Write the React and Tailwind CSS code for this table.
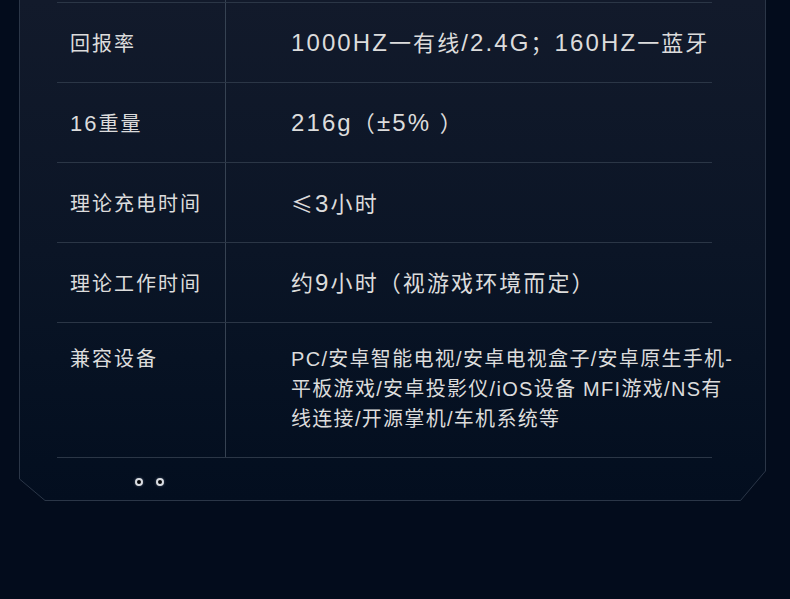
import React from 'react';

// latin runs render a bit larger than the CJK ones in the reference
const mixed = (s, cls = 'text-[24px]') =>
  s.split(/([\x20-\x7E±]+)/).filter(Boolean).map((part, i) =>
    /^[\x20-\x7E±]/.test(part) ? (
      <span key={i} className={cls}>{part}</span>
    ) : (
      <span key={i}>{part}</span>
    )
  );

const rows = [
  { label: '回报率', value: mixed('1000HZ一有线/2.4G；160HZ一蓝牙') },
  { label: mixed('16重量', 'text-[22px]'), value: mixed('216g（±5% ）') },
  {
    label: '理论充电时间',
    value: (
      <>
        <span className="font-['Noto_Sans_CJK_SC',sans-serif]">≤</span>
        <span className="text-[24px]">3</span>小时
      </>
    ),
  },
  { label: '理论工作时间', value: mixed('约9小时（视游戏环境而定）') },
];

const compat = [
  'PC/安卓智能电视/安卓电视盒子/安卓原生手机-',
  '平板游戏/安卓投影仪/iOS设备 MFI游戏/NS有',
  '线连接/开源掌机/车机系统等',
];

const SpecRow = ({ label, value }) => (
  <div className="flex h-[80px] border-t border-[#2b3646]">
    <div className="w-[168px] shrink-0 flex items-center pl-[13px] pt-[2px] text-[20px] leading-[30px] tracking-[2px]">
      <div>{label}</div>
    </div>
    <div className="flex-1 flex items-center pl-[65px] pt-[2px] border-l border-[#364252] text-[22px] leading-[30px] tracking-[2.1px] whitespace-nowrap">
      <div>{value}</div>
    </div>
  </div>
);

export default function App() {
  return (
    <div className="w-[790px] h-[599px] bg-[#030c1c] overflow-hidden font-['Liberation_Sans','Noto_Sans_CJK_SC',sans-serif] text-[#dcdcdc]">
      <div className="relative ml-[19px] w-[747px] h-[501px]">
        <div className="absolute inset-0 bg-linear-to-b from-[#121a2b] via-[#0b1526] to-[#030e1f] [clip-path:polygon(0_0,100%_0,100%_471px,calc(100%_-_25px)_100%,26px_100%,0_479px)]" />
        <svg className="absolute inset-0 pointer-events-none" width="747" height="501" viewBox="0 0 747 501" fill="none">
          <path d="M0.5 0 V479 L26 500.5 H721.5 L746.5 471 V0" stroke="#2b3647" strokeWidth="1" />
        </svg>

        <div className="relative ml-[38px] w-[655px]">
          <div className="flex h-[2px]">
            <div className="w-[168px] shrink-0" />
            <div className="flex-1 border-l border-[#364252]" />
          </div>
          {rows.map((r, i) => (
            <SpecRow key={i} label={r.label} value={r.value} />
          ))}
          <div className="flex h-[136px] border-y border-[#2b3646]">
            <div className="w-[168px] shrink-0 pl-[13px] pt-[21px] text-[20px] leading-[30px] tracking-[2px]">兼容设备</div>
            <div className="flex-1 min-w-0 pl-[65px] pt-[21px] border-l border-[#364252] text-[20px] leading-[30px] tracking-[1.3px]">
              {compat.map((line) => (
                <div key={line} className="whitespace-nowrap">{line}</div>
              ))}
            </div>
          </div>
        </div>

        <div className="relative flex gap-[13px] pl-[116px] mt-[20px]">
          <span className="w-[8px] h-[8px] rounded-full bg-[#020408] border-2 border-[#d9dce1] shadow-[0_0_3px_rgba(200,210,230,0.35)]" />
          <span className="w-[8px] h-[8px] rounded-full bg-[#020408] border-2 border-[#d9dce1] shadow-[0_0_3px_rgba(200,210,230,0.35)]" />
        </div>
      </div>
    </div>
  );
}
